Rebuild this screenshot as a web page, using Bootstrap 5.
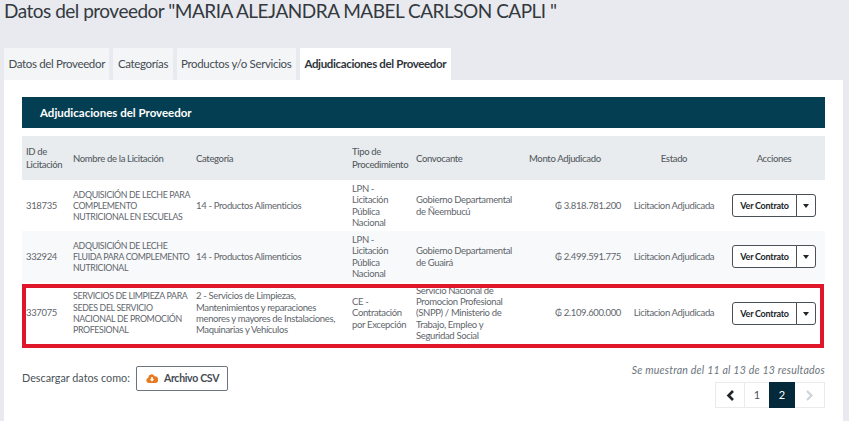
<!DOCTYPE html>
<html lang="es">
<head>
    <meta charset="UTF-8">
    <title>Datos del proveedor</title>
    <link rel="stylesheet" href="https://cdn.jsdelivr.net/npm/bootstrap@5.3.0/dist/css/bootstrap.min.css">
    <style>
        body {
            background-color: #e8eaef;
            color: #4a5258;
            font-family: "Lato", "Noto Sans", sans-serif;
            font-size: 10px;
            height: 421px;
            overflow: hidden;
        }
        .pagina { padding: 0 6px 0 4px; }
        .titulo {
            font-size: 19px;
            font-weight: 400;
            color: #33393e;
            margin: 0;
            height: 48px;
            padding-top: 0;
            letter-spacing: -.5px;
        }
        .pestanas { border: 0; gap: 4px; height: 32px; }
        .pestanas .nav-link {
            background: #f3f5f7;
            border: 0;
            border-radius: 0;
            color: #454c52;
            font-size: 11.5px;
            letter-spacing: -.35px;
            height: 32px;
            line-height: 32px;
            padding: 0 4.5px;
        }
        .pestanas .nav-link.active {
            background: #fff;
            color: #2f363b;
            font-weight: 700;
        }
        .panel-blanco {
            background: #fff;
            height: 341px;
            padding: 17px 18px 0;
        }
        .cabecera-azul {
            background: #033e52;
            color: #fff;
            font-size: 11.5px;
            font-weight: 700;
            width: 803px;
            height: 31px;
            line-height: 31px;
            margin-bottom: 8px;
            padding-left: 18px;
        }
        .tabla-adj {
            table-layout: fixed;
            width: 803px;
            margin: 0;
            font-size: 9.5px;
            letter-spacing: -.35px;
            line-height: 11.3px;
            color: #5f666c;
        }
        .tabla-adj th, .tabla-adj td {
            border: 0;
            padding: 0 4px;
            vertical-align: middle;
            color: inherit;
            background: transparent;
            box-shadow: none;
        }
        .tabla-adj thead tr { background: #e9ecef; height: 44px; }
        .tabla-adj th { font-weight: 500; color: #555c62; line-height: 13px; }
        .tabla-adj tbody tr { height: 51px; }
        .tabla-adj tbody tr.alterna { background: #f8f9fa; }
        .tabla-adj tbody tr.marcada {
            height: 62px;
            position: relative;
        }
        /* recuadro rojo encima de la fila */
        .tabla-adj tbody tr.marcada::after {
            content: "";
            position: absolute;
            top: 2px;
            bottom: -4px;
            left: 0;
            right: 1px;
            border: 4px solid #e0162b;
            pointer-events: none;
        }
        .tabla-adj td.mayus { font-size: 8.8px; padding-right: 2px; }
        .c-id { width: 47px; }
        .c-nom { width: 123px; }
        .c-cat { width: 156px; }
        .c-tipo { width: 64px; }
        .c-conv { width: 113px; }
        .c-monto { width: 100px; }
        .c-estado { width: 98px; }
        .c-acc { width: 102px; }
        .btn-ver {
            border: 1px solid #495057;
            border-radius: 3px;
            background: #fff;
            color: #212529;
            font-size: 9px;
            letter-spacing: -.25px;
            font-weight: 700;
            width: 65px;
            height: 23px;
            line-height: 21px;
            padding: 0;
        }
        .btn-flecha { width: 20px; }
        .btn-flecha::after {
            margin: 0;
            vertical-align: 1px;
            border-top: 4px solid #212529;
            border-left: 3.5px solid transparent;
            border-right: 3.5px solid transparent;
        }
        .pie-tabla { margin-top: 19px; }
        .descarga { font-size: 10.8px; color: #4a5258; gap: 6px; padding-top: 3px; }
        .btn-csv {
            border: 1px solid #6c757d;
            border-radius: 2px;
            background: #fff;
            color: #454c52;
            font-size: 10.5px;
            letter-spacing: -.3px;
            font-weight: 700;
            height: 25px;
            line-height: 23px;
            padding: 0 8px 0 9px;
            display: flex;
            align-items: center;
            gap: 6px;
        }
        .resumen { font-size: 10.6px; font-style: italic; color: #6c757d; margin-bottom: 5px; letter-spacing: .2px; line-height: 14px; }
        .paginador { margin: 0; }
        .paginador .page-link {
            height: 26px;
            padding: 0;
            background: #fff;
            border: 1px solid #e9ecef;
            border-radius: 0 !important;
            color: #495057;
            font-size: 11px;
            display: flex;
            align-items: center;
            justify-content: center;
        }
        .paginador .page-item.active .page-link { background: #04293a; border-color: #04293a; color: #fff; }
        .pg-flecha { width: 30px; }
        .pg-uno { width: 25px; }
        .pg-dos { width: 25px; }
    </style>
</head>
<body>
<div class="pagina">
    <h1 class="titulo">Datos del proveedor "MARIA ALEJANDRA MABEL CARLSON CAPLI "</h1>

    <ul class="nav nav-tabs pestanas">
        <li class="nav-item"><a class="nav-link" href="#">Datos del Proveedor</a></li>
        <li class="nav-item"><a class="nav-link" href="#">Categorías</a></li>
        <li class="nav-item"><a class="nav-link" href="#">Productos y/o Servicios</a></li>
        <li class="nav-item"><a class="nav-link active" href="#">Adjudicaciones del Proveedor</a></li>
    </ul>

    <div class="panel-blanco">
        <div class="cabecera-azul">Adjudicaciones del Proveedor</div>

        <table class="table tabla-adj">
            <thead>
                <tr>
                    <th class="c-id">ID de Licitación</th>
                    <th class="c-nom">Nombre de la Licitación</th>
                    <th class="c-cat">Categoría</th>
                    <th class="c-tipo">Tipo de Procedimiento</th>
                    <th class="c-conv">Convocante</th>
                    <th class="c-monto">Monto Adjudicado</th>
                    <th class="c-estado text-center">Estado</th>
                    <th class="c-acc text-center">Acciones</th>
                </tr>
            </thead>
            <tbody>
                <tr>
                    <td>318735</td>
                    <td class="mayus">ADQUISICIÓN DE LECHE PARA COMPLEMENTO NUTRICIONAL EN ESCUELAS</td>
                    <td>14 - Productos Alimenticios</td>
                    <td>LPN - Licitación Pública Nacional</td>
                    <td>Gobierno Departamental de Ñeembucú</td>
                    <td class="text-end">₲ 3.818.781.200</td>
                    <td class="text-center">Licitacion Adjudicada</td>
                    <td class="text-center">
                        <div class="btn-group">
                            <button type="button" class="btn btn-ver">Ver Contrato</button>
                            <button type="button" class="btn btn-ver btn-flecha dropdown-toggle"></button>
                        </div>
                    </td>
                </tr>
                <tr class="alterna">
                    <td>332924</td>
                    <td class="mayus">ADQUISICIÓN DE LECHE FLUIDA PARA COMPLEMENTO NUTRICIONAL</td>
                    <td>14 - Productos Alimenticios</td>
                    <td>LPN - Licitación Pública Nacional</td>
                    <td>Gobierno Departamental de Guairá</td>
                    <td class="text-end">₲ 2.499.591.775</td>
                    <td class="text-center">Licitacion Adjudicada</td>
                    <td class="text-center">
                        <div class="btn-group">
                            <button type="button" class="btn btn-ver">Ver Contrato</button>
                            <button type="button" class="btn btn-ver btn-flecha dropdown-toggle"></button>
                        </div>
                    </td>
                </tr>
                <tr class="marcada">
                    <td>337075</td>
                    <td class="mayus">SERVICIOS DE LIMPIEZA PARA SEDES DEL SERVICIO NACIONAL DE PROMOCIÓN PROFESIONAL</td>
                    <td>2 - Servicios de Limpiezas, Mantenimientos y reparaciones menores y mayores de Instalaciones, Maquinarias y Vehículos</td>
                    <td>CE - Contratación por Excepción</td>
                    <td>Servicio Nacional de Promocion Profesional (SNPP) / Ministerio de Trabajo, Empleo y Seguridad Social</td>
                    <td class="text-end">₲ 2.109.600.000</td>
                    <td class="text-center">Licitacion Adjudicada</td>
                    <td class="text-center">
                        <div class="btn-group">
                            <button type="button" class="btn btn-ver">Ver Contrato</button>
                            <button type="button" class="btn btn-ver btn-flecha dropdown-toggle"></button>
                        </div>
                    </td>
                </tr>
            </tbody>
        </table>

        <div class="d-flex justify-content-between align-items-start pie-tabla">
            <div class="d-flex align-items-start descarga">
                <span class="pt-1">Descargar datos como:</span>
                <button type="button" class="btn btn-csv">
                    <svg width="12" height="9" viewBox="0 0 13 10"><path fill="#e8791f" d="M3 10a3 3 0 0 1-.6-5.9A3.6 3.6 0 0 1 9.3 2.6 3.7 3.7 0 0 1 10 10z"/><path fill="#fff" d="M5.4 3.6h2.2v2.2h1.5L6.5 8.4 3.9 5.8h1.5z"/></svg>
                    Archivo CSV
                </button>
            </div>
            <div class="d-flex flex-column align-items-end">
                <div class="resumen">Se muestran del 11 al 13 de 13 resultados</div>
                <ul class="pagination paginador">
                    <li class="page-item pg-flecha"><a class="page-link" href="#"><svg width="9" height="11" viewBox="0 0 9 11"><path fill="none" stroke="#1f2529" stroke-width="2.6" d="M7 1 2.5 5.5 7 10"/></svg></a></li>
                    <li class="page-item pg-uno"><a class="page-link" href="#">1</a></li>
                    <li class="page-item pg-dos active"><a class="page-link" href="#">2</a></li>
                    <li class="page-item pg-flecha disabled"><a class="page-link" href="#"><svg width="9" height="11" viewBox="0 0 9 11"><path fill="none" stroke="#ced4da" stroke-width="2.2" d="M2 1l4.5 4.5L2 10"/></svg></a></li>
                </ul>
            </div>
        </div>
    </div>
</div>
<script src="https://cdn.jsdelivr.net/npm/bootstrap@5.3.0/dist/js/bootstrap.bundle.min.js"></script>
</body>
</html>
